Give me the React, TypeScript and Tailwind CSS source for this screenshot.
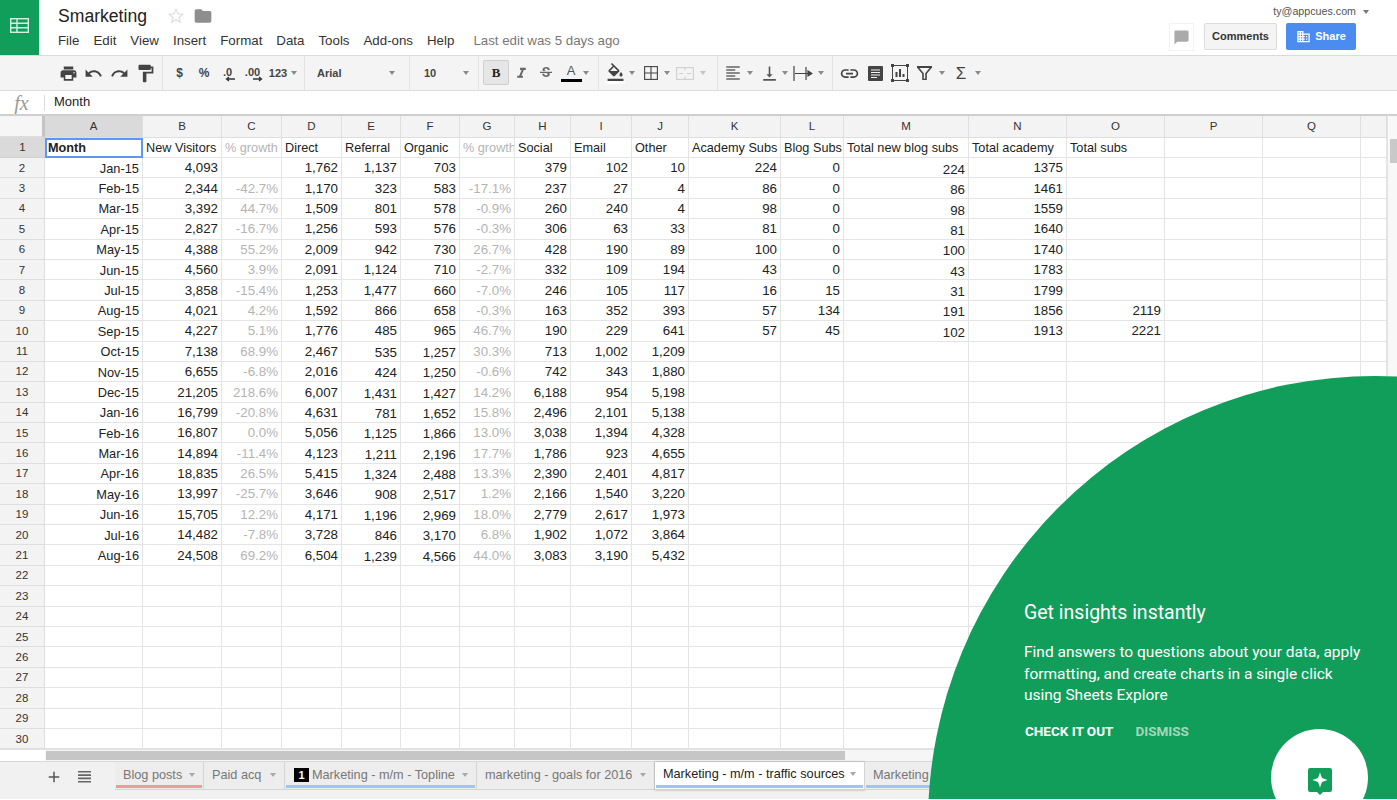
import type { ReactNode } from "react";
import {
  MdAdd,
  MdChatBubble,
  MdDomain,
  MdFolder,
  MdFormatAlignLeft,
  MdFormatColorFill,
  MdFormatItalic,
  MdFormatPaint,
  MdLink,
  MdPrint,
  MdRedo,
  MdStarBorder,
  MdStrikethroughS,
  MdUndo,
  MdVerticalAlignBottom,
} from "react-icons/md";

const GRID = "grid grid-cols-[45px_98px_79px_60px_60px_59px_59px_55px_56px_61px_57px_92px_63px_125px_98px_98px_98px_98px_26px]";
const COLS = ["A", "B", "C", "D", "E", "F", "G", "H", "I", "J", "K", "L", "M", "N", "O", "P", "Q", ""];

const HEADINGS = ["Month", "New Visitors", "% growth", "Direct", "Referral", "Organic", "% growth", "Social", "Email", "Other", "Academy Subs", "Blog Subs", "Total new blog subs", "Total academy", "Total subs"];

const DATA: string[][] = [
  ["Jan-15", "Feb-15", "Mar-15", "Apr-15", "May-15", "Jun-15", "Jul-15", "Aug-15", "Sep-15", "Oct-15", "Nov-15", "Dec-15", "Jan-16", "Feb-16", "Mar-16", "Apr-16", "May-16", "Jun-16", "Jul-16", "Aug-16"],
  ["4,093", "2,344", "3,392", "2,827", "4,388", "4,560", "3,858", "4,021", "4,227", "7,138", "6,655", "21,205", "16,799", "16,807", "14,894", "18,835", "13,997", "15,705", "14,482", "24,508"],
  ["", "-42.7%", "44.7%", "-16.7%", "55.2%", "3.9%", "-15.4%", "4.2%", "5.1%", "68.9%", "-6.8%", "218.6%", "-20.8%", "0.0%", "-11.4%", "26.5%", "-25.7%", "12.2%", "-7.8%", "69.2%"],
  ["1,762", "1,170", "1,509", "1,256", "2,009", "2,091", "1,253", "1,592", "1,776", "2,467", "2,016", "6,007", "4,631", "5,056", "4,123", "5,415", "3,646", "4,171", "3,728", "6,504"],
  ["1,137", "323", "801", "593", "942", "1,124", "1,477", "866", "485", "535", "424", "1,431", "781", "1,125", "1,211", "1,324", "908", "1,196", "846", "1,239"],
  ["703", "583", "578", "576", "730", "710", "660", "658", "965", "1,257", "1,250", "1,427", "1,652", "1,866", "2,196", "2,488", "2,517", "2,969", "3,170", "4,566"],
  ["", "-17.1%", "-0.9%", "-0.3%", "26.7%", "-2.7%", "-7.0%", "-0.3%", "46.7%", "30.3%", "-0.6%", "14.2%", "15.8%", "13.0%", "17.7%", "13.3%", "1.2%", "18.0%", "6.8%", "44.0%"],
  ["379", "237", "260", "306", "428", "332", "246", "163", "190", "713", "742", "6,188", "2,496", "3,038", "1,786", "2,390", "2,166", "2,779", "1,902", "3,083"],
  ["102", "27", "240", "63", "190", "109", "105", "352", "229", "1,002", "343", "954", "2,101", "1,394", "923", "2,401", "1,540", "2,617", "1,072", "3,190"],
  ["10", "4", "4", "33", "89", "194", "117", "393", "641", "1,209", "1,880", "5,198", "5,138", "4,328", "4,655", "4,817", "3,220", "1,973", "3,864", "5,432"],
  ["224", "86", "98", "81", "100", "43", "16", "57", "57"],
  ["0", "0", "0", "0", "0", "0", "15", "134", "45"],
  ["224", "86", "98", "81", "100", "43", "31", "191", "102"],
  ["1375", "1461", "1559", "1640", "1740", "1783", "1799", "1856", "1913"],
  ["", "", "", "", "", "", "", "2119", "2221"],
];

const isGrowth = (col: number) => col === 2 || col === 6;

// some columns sit a touch lower in the sheet
const cellOffset = (col: number, row: number) => {
  if (col === 12) return "pt-[4px]";
  if ((col === 4 || col === 5) && row >= 11) return "pt-[3px]";
  return "pt-[1px]";
};

const Caret = ({ color = "border-t-[#8a8a8a]" }: { color?: string }) => (
  <span className={`block w-0 h-0 border-x-[3px] border-x-transparent border-t-[4px] ${color}`} />
);

const Slot = ({ w, children }: { w: string; children?: ReactNode }) => (
  <div className={`${w} h-full flex items-center justify-center shrink-0 text-[#444]`}>{children}</div>
);

const DecimalIcon = ({ label, flip }: { label: string; flip?: boolean }) => (
  <div className="relative flex flex-col items-center text-[11px] font-bold leading-[12px] text-[#444] -mt-[3px]">
    <span>{label}</span>
    <svg width="10" height="6" viewBox="0 0 10 6" className="absolute -right-[3px] top-[10px]" fill="none" stroke="#333" strokeWidth="1.3">
      {flip ? <path d="M0 3h8M6 1l2.5 2L6 5" /> : <path d="M10 3H2M4 1L1.5 3 4 5" />}
    </svg>
  </div>
);

function Toolbar() {
  return (
    <div className="h-[35px] flex bg-[#f4f4f4] border-b border-[#dcdcdc] pl-[56px]">
      <div className="w-[107px] flex border-r border-[#e2e2e2] shrink-0">
        <Slot w="w-[25px]"><MdPrint size={19} /></Slot>
        <Slot w="w-[25px]"><MdUndo size={19} /></Slot>
        <Slot w="w-[26px]"><MdRedo size={19} /></Slot>
        <Slot w="w-[26px]"><MdFormatPaint size={21} /></Slot>
      </div>
      <div className="w-[142px] pl-[4px] flex border-r border-[#e2e2e2] shrink-0">
        <Slot w="w-[25px]"><span className="text-[12px] font-bold">$</span></Slot>
        <Slot w="w-[24px]"><span className="text-[12px] font-bold">%</span></Slot>
        <Slot w="w-[23px]"><DecimalIcon label=".0" /></Slot>
        <Slot w="w-[27px]"><DecimalIcon label=".00" flip /></Slot>
        <Slot w="w-[24px]"><span className="text-[11px] font-bold">123</span></Slot>
        <Slot w="w-[8px]"><Caret /></Slot>
      </div>
      <div className="w-[105px] pl-[12px] pr-[14px] flex items-center justify-between border-r border-[#e2e2e2] shrink-0">
        <span className="text-[11px] font-bold text-[#444]">Arial</span>
        <Caret />
      </div>
      <div className="w-[69px] pl-[14px] pr-[9px] flex items-center justify-between border-r border-[#e2e2e2] shrink-0">
        <span className="text-[11px] font-bold text-[#444]">10</span>
        <Caret />
      </div>
      <div className="w-[120px] pl-[4px] flex border-r border-[#e2e2e2] shrink-0">
        <div className="w-[26px] h-[25px] mt-[4px] flex items-center justify-center bg-[#e6e6e6] border border-[#cfcfcf] rounded-[2px] font-['Liberation_Serif',serif] text-[13px] font-bold text-[#222]">B</div>
        <Slot w="w-[24px]"><MdFormatItalic size={17} className="text-[#666]" /></Slot>
        <Slot w="w-[26px]"><MdStrikethroughS size={16} className="text-[#666]" /></Slot>
        <Slot w="w-[24px]">
          <div className="flex flex-col items-center">
            <span className="text-[13px] leading-[14px] text-[#555]">A</span>
            <span className="block w-[21px] h-[3px] bg-black mt-[1px]" />
          </div>
        </Slot>
        <Slot w="w-[6px]"><Caret /></Slot>
      </div>
      <div className="w-[119px] pl-[4px] flex border-r border-[#e2e2e2] shrink-0">
        <Slot w="w-[24px]">
          <div className="flex flex-col items-center">
            <MdFormatColorFill size={19} />
            <span className="block w-[20px] h-[3px] bg-white -mt-[1px]" />
          </div>
        </Slot>
        <Slot w="w-[10px]"><Caret /></Slot>
        <Slot w="w-[28px]">
          <svg width="14" height="14" viewBox="0 0 14 14" fill="none" stroke="#444" strokeWidth="1.1">
            <rect x="0.6" y="0.6" width="12.8" height="12.8" />
            <path d="M7 .6v12.8M.6 7h12.8" />
          </svg>
        </Slot>
        <Slot w="w-[4px]"><Caret /></Slot>
        <Slot w="w-[32px]">
          <svg width="18" height="13" viewBox="0 0 18 13" fill="none" stroke="#cfcfcf" strokeWidth="1.1">
            <rect x="0.6" y="0.6" width="16.8" height="11.8" />
            <path d="M9 .6v3M9 9.4v3M3 6.5h4M11 6.5h4" />
          </svg>
        </Slot>
        <Slot w="w-[4px]"><Caret color="border-t-[#c4c4c4]" /></Slot>
      </div>
      <div className="w-[115px] pl-[3px] flex border-r border-[#e2e2e2] shrink-0">
        <Slot w="w-[24px]"><MdFormatAlignLeft size={18} className="text-[#666]" /></Slot>
        <Slot w="w-[10px]"><Caret /></Slot>
        <Slot w="w-[28px]"><MdVerticalAlignBottom size={19} className="text-[#555]" /></Slot>
        <Slot w="w-[4px]"><Caret /></Slot>
        <Slot w="w-[32px]">
          <svg width="20" height="15" viewBox="0 0 20 15" fill="none" stroke="#444" strokeWidth="1.2">
            <path d="M1 0v15M13 1v13M2 7.5h13" />
            <path d="M15 5l4 2.5-4 2.5z" fill="#444" />
          </svg>
        </Slot>
        <Slot w="w-[4px]"><Caret /></Slot>
      </div>
      <div className="pl-[3px] flex">
        <Slot w="w-[26px]"><MdLink size={21} /></Slot>
        <Slot w="w-[26px]">
          <svg width="15" height="15" viewBox="0 0 15 15">
            <rect width="15" height="15" rx="1" fill="#444" />
            <path d="M3 4h9M3 6.5h9M3 9h9M3 11.5h6" stroke="#f4f4f4" strokeWidth="1" />
          </svg>
        </Slot>
        <Slot w="w-[24px]">
          <svg width="18" height="18" viewBox="0 0 18 18" fill="none" stroke="#444" strokeWidth="1">
            <rect x="1.5" y="1.5" width="15" height="15" />
            <path d="M0 0h3v3H0zM15 0h3v3h-3zM0 15h3v3H0zM15 15h3v3h-3z" fill="#444" stroke="none" />
            <path d="M5.5 13V8M9 13V5M12.5 13v-3" strokeWidth="2" />
          </svg>
        </Slot>
        <Slot w="w-[24px]">
          <svg width="15" height="14" viewBox="0 0 15 14" fill="none" stroke="#444">
            <path d="M0 0h15v2H0z" fill="#444" stroke="none" />
            <path d="M1 1.5l5 6v6h3v-6l5-6" strokeWidth="1.6" />
          </svg>
        </Slot>
        <Slot w="w-[12px]"><Caret /></Slot>
        <Slot w="w-[26px]"><span className="text-[17px] leading-none text-[#444]">Σ</span></Slot>
        <Slot w="w-[8px]"><Caret /></Slot>
      </div>
    </div>
  );
}

function Header() {
  const menu = ["File", "Edit", "View", "Insert", "Format", "Data", "Tools", "Add-ons", "Help"];
  return (
    <div className="h-[56px] flex border-b border-[#dadada]">
      <div className="w-[39px] h-[55px] bg-[#119d5a] flex items-center justify-center shrink-0">
        <svg width="19" height="15" viewBox="0 0 19 15" fill="none" stroke="#d6f0e2" strokeWidth="1.4" className="-mt-[5px]">
          <rect x="0.7" y="0.7" width="17.6" height="13.6" />
          <path d="M0.7 5.3h17.6M0.7 9.8h17.6M7 .7v13.6" />
        </svg>
      </div>
      <div className="pl-[19px] flex flex-col">
        <div className="h-[32px] flex items-center">
          <span className="text-[17.6px] text-[#222]">Smarketing</span>
          <MdStarBorder size={20} className="ml-[19px] text-[#e0e0e0]" />
          <MdFolder size={20} className="ml-[7px] text-[#8e8e8e]" />
        </div>
        <div className="flex items-center gap-[14px] text-[13.3px] text-[#333] h-[17px]">
          {menu.map((m) => (
            <span key={m}>{m}</span>
          ))}
          <span className="ml-[5px] text-[#777]">Last edit was 5 days ago</span>
        </div>
      </div>
      <div className="ml-auto pr-[41px] flex flex-col items-end">
        <div className="h-[23px] flex items-center text-[10.7px] text-[#555] -mr-[13px]">
          ty@appcues.com
          <span className="ml-[7px]"><Caret color="border-t-[#777]" /></span>
        </div>
        <div className="flex items-start text-[11px] font-bold">
          <div className="w-[25px] h-[28px] border border-[#f2f2f2] flex items-center justify-center">
            <MdChatBubble size={17} className="text-[#aaa]" />
          </div>
          <div className="ml-[10px] w-[73px] h-[27px] flex items-center justify-center bg-[#f4f4f4] border border-[#dcdcdc] rounded-[2px] text-[#333]">Comments</div>
          <div className="ml-[9px] w-[70px] h-[27px] flex items-center justify-center gap-[4px] bg-[#4a8cf0] rounded-[2px] text-white">
            <MdDomain size={15} />
            Share
          </div>
        </div>
      </div>
    </div>
  );
}

function Sheet() {
  const rows = Array.from({ length: 29 }, (_, i) => i + 2);
  return (
    <div className="flex">
      <div className="w-[1387px] shrink-0">
        <div className={`${GRID} h-[24px] border-t-2 border-[#cfcfcf] bg-[#f3f3f3] text-[11.5px] text-[#333]`}>
          <div className="border-r-[3px] border-b-2 border-r-[#c4c4c4] border-b-[#dcdcdc] bg-[#f6f6f6]" />
          {COLS.map((c, i) => (
            <div
              key={i}
              className={`flex items-center justify-center border-r border-b border-[#dedede] ${c === "A" ? "bg-[#dadada]" : ""}`}
            >
              {c}
            </div>
          ))}
        </div>
        <div className={`${GRID} h-[20px] text-[12.7px] text-[#222]`}>
          <div className="flex items-center justify-center bg-[#dadada] border-b border-[#d0d0d0] text-[11.5px] text-[#333]">1</div>
          {COLS.map((c, i) => (
            <div
              key={i}
              className={`flex items-center overflow-hidden whitespace-nowrap pt-[2px] ${
                i === 0 ? "pl-[1px] border-2 border-[#5b97f5] font-bold" : "pl-[3px] border-r border-b border-[#e4e4e4]"
              } ${isGrowth(i) ? "text-[#b4b4b4]" : ""}`}
            >
              {HEADINGS[i] ?? ""}
            </div>
          ))}
        </div>
        {rows.map((r) => (
          <div key={r} className={`${GRID} h-[20.4px] text-[13.3px] text-[#222]`}>
            <div className="flex items-center justify-center pt-[1px] bg-[#f3f3f3] border-r border-b border-[#dedede] text-[11.5px] text-[#333]">{r}</div>
            {COLS.map((c, i) => (
              <div
                key={i}
                className={`flex items-center justify-end overflow-hidden whitespace-nowrap pr-[3px] border-r border-b border-[#e4e4e4] ${cellOffset(i, r)} ${
                  isGrowth(i) ? "text-[#b4b4b4]" : ""
                } ${i === 0 ? "text-[12.8px]" : ""}`}
              >
                {DATA[i]?.[r - 2] ?? ""}
              </div>
            ))}
          </div>
        ))}
      </div>
      <div className="w-[10px] border-t-2 border-[#cfcfcf] bg-[#f8f8f8] border-l border-l-[#e4e4e4] shrink-0">
        <div className="w-[7px] h-[24px] mt-[23px] ml-[2px] bg-[#c9c9c9]" />
      </div>
    </div>
  );
}

function SheetTab({
  label,
  width,
  line,
  active,
  badge,
}: {
  label: string;
  width: string;
  line?: string;
  active?: boolean;
  badge?: boolean;
}) {
  return (
    <div className={`${width} h-[28px] shrink-0 flex flex-col border-r border-b border-[#d4d4d4] ${active ? "bg-white shadow-[0_0_2px_#999]" : "bg-[#ededed]"}`}>
      <div className={`h-[23px] pr-[8px] flex items-center text-[12.7px] ${badge ? "pl-[9px]" : "pl-[8px]"} ${active ? "text-[#222] pt-[1px]" : "text-[#777] pt-[3px]"}`}>
        {badge && (
          <span className="w-[15px] h-[14px] mr-[3px] bg-black text-white text-[11px] font-bold leading-[14px] text-center">1</span>
        )}
        <span className="whitespace-nowrap">{label}</span>
        <span className="ml-auto"><Caret color="border-t-[#a8a8a8]" /></span>
      </div>
      <div className={`h-[3px] mx-[1px] ${line ?? ""}`} />
    </div>
  );
}

function TabBar() {
  return (
    <div className="h-[38px] flex bg-[#f1f1f1] border-t border-[#d8d8d8]">
      <div className="w-[115px] h-[29px] flex items-center shrink-0 pl-[45px] text-[#555]">
        <MdAdd size={18} />
        <svg width="13" height="12" viewBox="0 0 13 12" fill="#666" className="ml-[15px]">
          <path d="M0 0h13v1.6H0zM0 3.3h13v1.6H0zM0 6.6h13v1.6H0zM0 9.9h13v1.6H0z" />
        </svg>
      </div>
      <SheetTab label="Blog posts" width="w-[89px]" line="bg-[#ee9a9a]" />
      <SheetTab label="Paid acq" width="w-[81px]" />
      <SheetTab label="Marketing - m/m - Topline" width="w-[192px]" line="bg-[#a4c2f4]" badge />
      <SheetTab label="marketing - goals for 2016" width="w-[178px]" />
      <SheetTab label="Marketing - m/m - traffic sources" width="w-[210px]" line="bg-[#a4c2f4]" active />
      <SheetTab label="Marketing" width="w-[120px]" line="bg-[#a4c2f4]" />
    </div>
  );
}

function ExplorePromo() {
  return (
    <div className="absolute left-0 top-0 w-[1397px] h-[799px] overflow-hidden pointer-events-none">
      <div className="absolute left-[928px] top-[376px] w-[894px] h-[894px] rounded-full bg-[#119d5a] font-['Roboto',sans-serif] text-white pl-[96px] pt-[225px]">
        <div className="text-[19.5px] leading-[24px]">Get insights instantly</div>
        <div className="w-[345px] mt-[17px] text-[15.5px] leading-[21.5px]">
          Find answers to questions about your data, apply formatting, and create charts in a single click using Sheets Explore
        </div>
        <div className="mt-[15px] flex text-[13.5px] font-bold leading-[18px]">
          <span className="ml-[1px]">CHECK IT OUT</span>
          <span className="ml-[22px] text-[#a3d8ba]">DISMISS</span>
        </div>
        <div className="absolute left-[343px] top-[353px] w-[97px] h-[97px] rounded-full bg-white flex items-start justify-center pt-[39px]">
          <svg width="24" height="27" viewBox="0 0 24 27">
            <path d="M2 0h20a2 2 0 0 1 2 2v20a2 2 0 0 1-2 2h-7l-3 3-3-3H2a2 2 0 0 1-2-2V2a2 2 0 0 1 2-2z" fill="#119d5a" />
            <path d="M12 4.5l2 5.5 5.5 2-5.5 2-2 5.5-2-5.5-5.5-2 5.500-2z" fill="#fff" />
          </svg>
        </div>
      </div>
    </div>
  );
}

export default function App() {
  return (
    <div className="relative w-[1397px] h-[800px] overflow-hidden bg-white font-['Liberation_Sans',Arial,sans-serif]">
      <Header />
      <Toolbar />
      <div className="h-[23px] flex items-center">
        <div className="w-[44px] flex justify-center pr-[1px] font-['Liberation_Serif',serif] italic text-[20px] text-[#999]">fx</div>
        <div className="w-px h-[16px] bg-[#dcdcdc]" />
        <div className="pl-[9px] pb-[2px] text-[13px] text-[#222]">Month</div>
      </div>
      <Sheet />
      <div className="h-[12px] flex bg-[#f6f6f6] border-t border-[#e0e0e0]">
        <div className="w-[45px] bg-white" />
        <div className="w-[799px] h-[9px] mt-[1px] ml-[1px] bg-[#c6c6c6]" />
      </div>
      <TabBar />
      <ExplorePromo />
    </div>
  );
}
